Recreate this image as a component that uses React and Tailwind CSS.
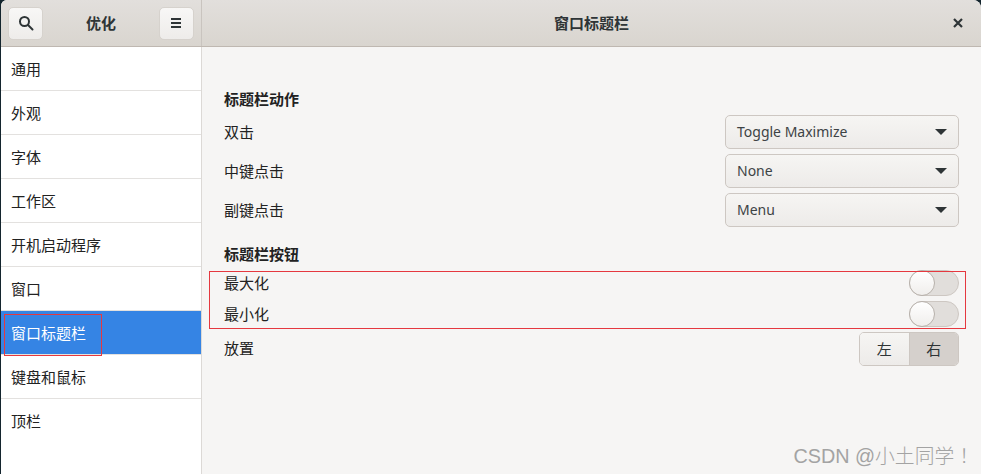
import React from "react";

const items = ["通用", "外观", "字体", "工作区", "开机启动程序", "窗口", "窗口标题栏", "键盘和鼠标", "顶栏"];

function HeaderButton({ children }) {
  return (
    <div className="flex h-[33px] w-[35px] items-center justify-center rounded-[5px] border border-[#d6d2cd] bg-gradient-to-b from-[#f8f7f6] to-[#eeecea]">
      {children}
    </div>
  );
}

function Select({ label }) {
  return (
    <div className="flex h-[34px] items-center justify-between">
      <span className="text-[15px] leading-[18px]">{label.name}</span>
      <div className="flex h-[34px] w-[234px] items-center justify-between rounded-[5px] border border-[#cdc7c2] bg-gradient-to-b from-[#f6f5f3] to-[#edebe9] px-[11px] text-[14px] text-[#3d4345]">
        <span className="pb-[2px]">{label.value}</span>
        <svg width="12" height="6" viewBox="0 0 12 6"><path d="M0 0h12L6 6z" fill="#2e3436" /></svg>
      </div>
    </div>
  );
}

function Toggle() {
  return (
    <div className="relative h-[26px] w-[50px] rounded-full border border-[#cdc7c2] bg-[#e1dedb]">
      <div className="absolute -left-px -top-px h-[26px] w-[26px] rounded-full border border-[#b8b2ac] bg-gradient-to-b from-[#ffffff] to-[#f0eeec]" />
    </div>
  );
}

function ToggleRow({ label }) {
  return (
    <div className="flex h-[26px] items-center justify-between">
      <span>{label}</span>
      <Toggle />
    </div>
  );
}

export default function App() {
  return (
    <div
      className="relative h-[474px] w-[981px] overflow-hidden bg-[#14252e] pl-px text-[15px] text-[#2e3436]"
      style={{ fontFamily: '"Noto Sans", "Noto Sans CJK SC", sans-serif' }}
    >
      <div className="flex h-full flex-col overflow-hidden rounded-tl-[6px] rounded-tr-[8px] bg-[#f6f5f4]">
        <div className="flex h-[47px] shrink-0 border-b border-[#bfb8b1] bg-gradient-to-b from-[#e2dfdc] to-[#d9d5cf]">
          <div className="flex w-[201px] shrink-0 items-center justify-between border-r border-[#c9c4bf] pl-[7px] pr-[7px]">
            <HeaderButton>
              <svg width="16" height="16" viewBox="0 0 16 16" fill="none" stroke="#2e3436" strokeWidth="2">
                <circle cx="6.5" cy="6.5" r="4.5" />
                <path d="M10 10l4.5 4.5" strokeLinecap="round" />
              </svg>
            </HeaderButton>
            <span className="font-bold">优化</span>
            <HeaderButton>
              <svg width="12" height="12" viewBox="0 0 12 12" fill="#2e3436">
                <rect x="1" y="1" width="10" height="2" />
                <rect x="1" y="5" width="10" height="2" />
                <rect x="1" y="9" width="10" height="2" />
              </svg>
            </HeaderButton>
          </div>
          <div className="relative flex flex-1 items-center justify-center font-bold">
            窗口标题栏
            <svg className="absolute right-[18px] top-[18px]" width="10" height="10" viewBox="0 0 10 10" stroke="#2e3436" strokeWidth="2.2">
              <path d="M1 1l8 8M9 1l-8 8" />
            </svg>
          </div>
        </div>

        <div className="flex min-h-0 flex-1">
          <div className="w-[201px] shrink-0 border-r border-[#dcd9d6] bg-white">
            {items.map((item, i) => (
              <div
                key={item}
                className={
                  i === 6
                    ? "relative flex h-[44px] items-center border-b border-[#e3e1df] bg-[#3584e4] pl-[10px] pt-[2px] text-white"
                    : i === 8
                      ? "relative flex h-[44px] items-center pl-[10px] text-[#222]"
                      : "relative flex h-[44px] items-center border-b border-[#e3e1df] pl-[10px] pt-[2px] text-[#222]"
                }
              >
                {item}
                {i === 6 && (
                  <div className="absolute left-[3px] top-[3px] h-[42px] w-[98px] border border-[#e5383f]" />
                )}
              </div>
            ))}
          </div>

          <div className="relative flex-1 pl-[22px] pr-[22px] pt-[43px] text-[#222]">
            <div className="font-bold leading-[18px]">标题栏动作</div>
            <div className="mt-[7px] flex flex-col gap-[5px]">
              <Select label={{ name: "双击", value: "Toggle Maximize" }} />
              <Select label={{ name: "中键点击", value: "None" }} />
              <Select label={{ name: "副键点击", value: "Menu" }} />
            </div>
            <div className="mt-[18px] font-bold leading-[18px]">标题栏按钮</div>
            <div className="relative mt-[7px] flex flex-col gap-[5px]">
              <ToggleRow label="最大化" />
              <ToggleRow label="最小化" />
              <div className="absolute -left-[15px] -right-[7px] top-px h-[58px] border border-[#e5383f]" />
            </div>
            <div className="mt-[5px] flex h-[34px] items-center justify-between">
              <span className="pb-[2px]">放置</span>
              <div className="flex h-[34px] w-[100px] overflow-hidden rounded-[5px] border border-[#cdc7c2] text-[#2e3436]">
                <div className="flex flex-1 items-center justify-center border-r border-[#cdc7c2] bg-gradient-to-b from-[#f6f5f3] to-[#edebe9]">左</div>
                <div className="flex flex-1 items-center justify-center bg-[#d5d0cc]">右</div>
              </div>
            </div>
          </div>
        </div>
      </div>

      <div
        className="absolute bottom-[6px] right-[7px] text-[19.8px] font-light leading-[24px] text-[#a3a3a3]"
        style={{ fontFamily: '"Liberation Sans", "Noto Sans CJK JP", sans-serif' }}
      >
        CSDN @小土同学！
      </div>
    </div>
  );
}
